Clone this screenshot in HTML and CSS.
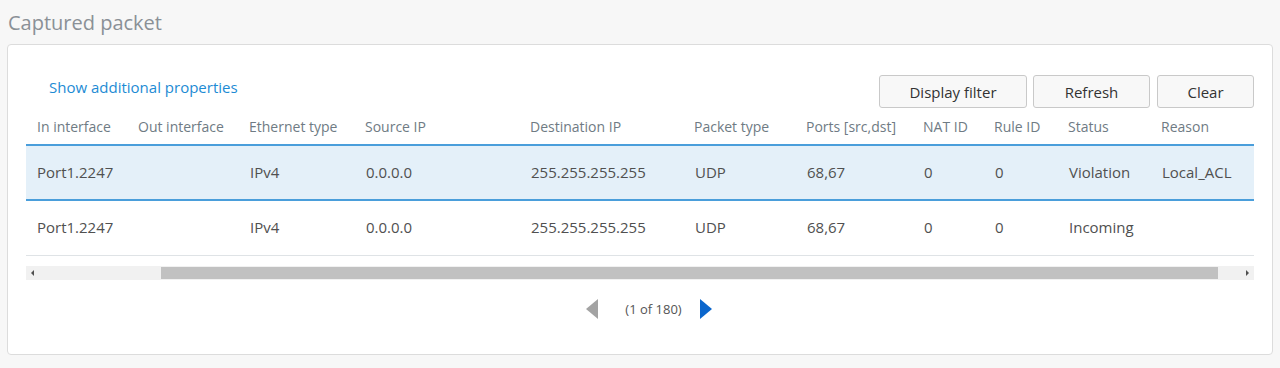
FILE: index.html
```html
<!DOCTYPE html>
<html lang="en">
<head>
<meta charset="utf-8">
<title>Captured packet</title>
<link rel="stylesheet" href="styles.css">
</head>
<body>
<h2 class="page-title">Captured packet</h2>
<section class="panel">
  <div class="toolbar">
    <a class="link" href="#">Show additional properties</a>
    <div class="actions">
      <button class="btn btn-filter">Display filter</button>
      <button class="btn btn-refresh">Refresh</button>
      <button class="btn btn-clear">Clear</button>
    </div>
  </div>
  <table class="grid">
    <colgroup>
      <col class="c1"><col class="c2"><col class="c3"><col class="c4"><col class="c5"><col class="c6"><col class="c7"><col class="c8"><col class="c9"><col class="c10"><col class="c11">
    </colgroup>
    <thead>
      <tr>
        <th>In interface</th><th>Out interface</th><th>Ethernet type</th><th>Source IP</th><th>Destination IP</th><th>Packet type</th><th>Ports [src,dst]</th><th>NAT ID</th><th>Rule ID</th><th>Status</th><th>Reason</th>
      </tr>
    </thead>
    <tbody>
      <tr class="selected">
        <td>Port1.2247</td><td></td><td>IPv4</td><td>0.0.0.0</td><td>255.255.255.255</td><td>UDP</td><td>68,67</td><td>0</td><td>0</td><td>Violation</td><td>Local_ACL</td>
      </tr>
      <tr>
        <td>Port1.2247</td><td></td><td>IPv4</td><td>0.0.0.0</td><td>255.255.255.255</td><td>UDP</td><td>68,67</td><td>0</td><td>0</td><td>Incoming</td><td></td>
      </tr>
    </tbody>
  </table>
  <div class="hscroll">
    <span class="arrow-l"></span>
    <div class="track"><div class="thumb"></div></div>
    <span class="arrow-r"></span>
  </div>
  <div class="pager">
    <span class="pg-prev"></span>
    <span class="pg-text">(1 of 180)</span>
    <span class="pg-next"></span>
  </div>
</section>
</body>
</html>
```

FILE: styles.css
```css
* { box-sizing: border-box; }
html, body { margin: 0; padding: 0; }
body {
  background: #f7f7f7;
  font-family: "Open Sans", "Noto Sans", sans-serif;
  color: #4a4a4a;
  height: 368px;
  overflow: hidden;
}
.page-title {
  margin: 0;
  padding: 9px 0 0 8px;
  height: 44px;
  font-size: 20px;
  font-weight: 400;
  color: #8a9096;
  line-height: 28px;
}
.panel {
  margin: 0 7px;
  height: 311px;
  background: #fff;
  border: 1px solid #dcdcdc;
  border-radius: 4px;
  padding: 30px 18px 0 18px;
}
.toolbar {
  display: flex;
  justify-content: space-between;
  align-items: flex-start;
  height: 32px;
}
.link {
  color: #1d8bd4;
  text-decoration: none;
  font-size: 15px;
  line-height: 20px;
  margin: 2px 0 0 23px;
}
.actions { display: flex; gap: 6px; }
.btn {
  height: 33px;
  border: 1px solid #c9c9c9;
  border-radius: 3px;
  background: #f8f8f8;
  font-family: inherit;
  font-size: 15px;
  color: #333;
  padding: 0;
}
.btn-filter { width: 148px; }
.btn-refresh { width: 117px; }
.btn-clear { width: 97px; margin-left: 1px; }
.grid {
  width: 1228px;
  border-collapse: collapse;
  table-layout: fixed;
  margin-top: 3px;
}
.c1 { width: 101px; } .c2 { width: 111px; } .c3 { width: 116px; }
.c4 { width: 165px; } .c5 { width: 164px; } .c6 { width: 112px; }
.c7 { width: 117px; } .c8 { width: 71px; } .c9 { width: 74px; }
.c10 { width: 93px; } .c11 { width: 104px; }
.grid th {
  text-align: left;
  font-weight: 400;
  font-size: 14px;
  color: #6f7b84;
  height: 35px;
  padding: 0 0 2px 11px;
  border-bottom: 2px solid #4a9edb;
  white-space: nowrap;
  overflow: hidden;
}
.grid td {
  font-size: 15px;
  color: #505050;
  height: 55px;
  padding: 0 0 2px 12px;
  border-bottom: 1px solid #dfe3e6;
  white-space: nowrap;
}
.grid td:first-child { padding-left: 11px; }
.grid tr.selected td {
  background: #e4f0f9;
  border-bottom: 2px solid #4a9edb;
}
.hscroll {
  display: flex;
  align-items: center;
  margin-top: 10px;
  height: 14px;
  background: #f1f1f1;
  width: 1228px;
}
.arrow-l, .arrow-r {
  width: 0; height: 0;
  border-top: 3px solid transparent;
  border-bottom: 3px solid transparent;
}
.arrow-l { border-right: 3px solid #505050; margin: 0 0 0 5px; }
.arrow-r { border-left: 3px solid #505050; margin: 0 5px 0 0; }
.track {
  flex: 1;
  height: 100%;
  padding: 1px 28px 1px 127px;
}
.thumb { height: 100%; background: #c1c1c1; }
.pager {
  display: flex;
  justify-content: center;
  align-items: center;
  margin-top: 19px;
  margin-left: 18px;
}
.pg-prev, .pg-next {
  width: 0; height: 0;
  border-top: 10px solid transparent;
  border-bottom: 10px solid transparent;
}
.pg-prev { border-right: 12px solid #a3a3a3; margin-right: 27px; }
.pg-next { border-left: 12px solid #0b66cc; margin-left: 18px; }
.pg-text { font-size: 13px; color: #555; }
```
